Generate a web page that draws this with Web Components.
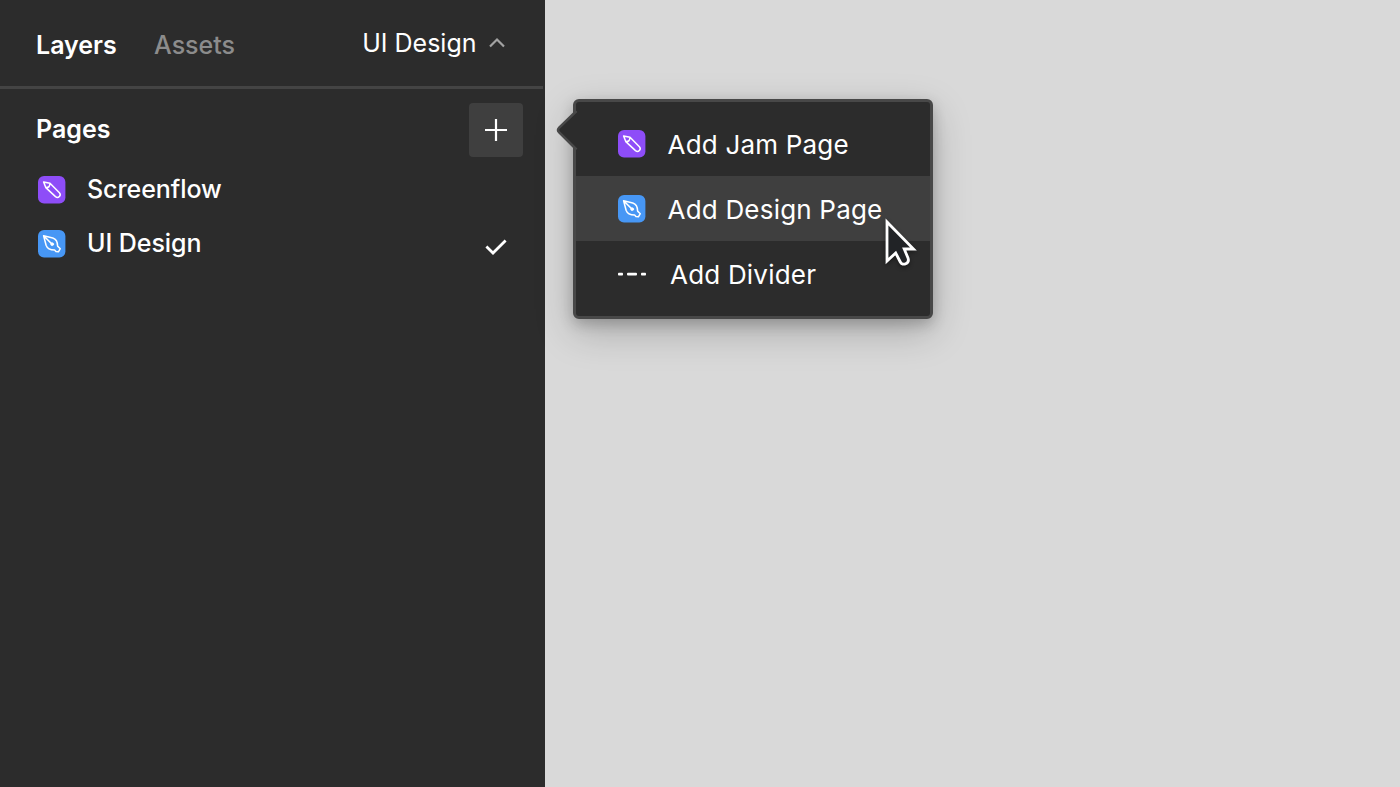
<!DOCTYPE html>
<html lang="en">
<head>
<meta charset="utf-8">
<title>Pages</title>
<style>
html,body{margin:0;height:100%;overflow:hidden;background:#d9d9d9}
body{font-family:Inter,"Liberation Sans",sans-serif;color:#fff}
</style>
</head>
<body>
<design-app></design-app>
<script>
const define = (name, html) => customElements.define(name, class extends HTMLElement {
  constructor() {
    super();
    const t = document.createElement('template');
    t.innerHTML = html;
    this.attachShadow({mode: 'open'}).append(t.content.cloneNode(true));
  }
});

define('jam-icon', `<style>:host{display:block;width:28px;height:28px;flex:none}svg{display:block}</style>
<svg width="28" height="28" viewBox="0 0 28 28" fill="none" stroke="#fff" stroke-width="1.5" stroke-linejoin="round" stroke-linecap="round">
<rect width="27.4" height="27.4" rx="6" fill="#8e4df8" stroke="none"/>
<path d="M5.6 5.9 L12 7.3 L21.4 16.7 C23.7 19.3 20.3 23 17.5 20.6 L7.8 11.6 Z M7.9 11.6 C10.8 11.7 12 10.3 11.9 7.4"/></svg>`);

define('pen-icon', `<style>:host{display:block;width:28px;height:28px;flex:none}svg{display:block}</style>
<svg width="28" height="28" viewBox="0 0 28 28" fill="none" stroke="#fff" stroke-width="1.5" stroke-linejoin="round" stroke-linecap="round">
<rect width="27.4" height="27.4" rx="6" fill="#4797f5" stroke="none"/>
<path d="M5.6 5.8 L14.8 8 C18.4 9.2 19.6 12.5 19.6 16.1 L22.3 18.7 L20.4 21.8 L17.9 21.4 L16.6 20 C12.6 20 9.4 18.9 8.1 15.2 Z M5.8 6 L14 14.1"/>
<circle cx="14.2" cy="14.2" r="1.4" fill="#fff" stroke-width=".8"/></svg>`);

define('divider-icon', `<style>:host{display:block;width:28px;height:28px;flex:none}svg{display:block}</style>
<svg width="28" height="28" viewBox="0 0 28 28" fill="#fff"><rect y="12.7" width="5" height="2.8" rx=".8"/><rect x="9" y="12.7" width="10" height="2.8" rx="1"/><rect x="23" y="12.7" width="5" height="2.8" rx=".8"/></svg>`);

define('app-tabs', `<style>
:host{display:flex;align-items:center;height:86px;box-sizing:border-box;padding:0 39.5px 0 36px;font-size:25px;line-height:30px}
.a{font-weight:600;width:118px;padding-top:4px}.b{font-weight:500;color:#8c8c8c;padding-top:4px}
.c{margin-left:auto;display:flex;align-items:center;gap:11px;padding-bottom:1px}
svg{display:block}</style>
<div class="a">Layers</div><div class="b">Assets</div>
<div class="c"><span>UI Design</span><svg width="18" height="12" viewBox="0 0 18 12" fill="none" stroke="#a2a2a2" stroke-width="2.2"><path d="M2 9.5 L9 2.5 L16 9.5"/></svg></div>`);

define('pages-heading', `<style>
:host{display:flex;align-items:center;justify-content:space-between;height:54px;padding:0 22px 0 36px;font-size:25px;line-height:30px;font-weight:600}
span{padding-bottom:2px}
button{display:grid;place-items:center;width:54px;height:54px;border:0;border-radius:4px;background:#3f3f3f;padding:0}
svg{display:block}</style>
<span>Pages</span><button aria-label="Add page"><svg width="24" height="24" viewBox="0 0 24 24" stroke="#fff" stroke-width="2.2"><path d="M1 12H23M12 1V23"/></svg></button>`);

define('page-row', `<style>
:host{display:flex;align-items:center;height:54px;padding:0 37px 0 37.5px;font-size:25px;line-height:30px;font-weight:500;letter-spacing:-.06px}
.t{margin-left:21.5px;flex:1;padding-bottom:2px}svg{display:none}:host([checked]) svg{display:block;margin-top:6px}</style>
<slot name="icon"></slot><span class="t"><slot></slot></span>
<svg width="24" height="18" viewBox="0 0 24 18" fill="none" stroke="#fff" stroke-width="2.8"><path d="M2.4 8.6 L9 15 L21.6 2.6"/></svg>`);

define('side-panel', `<style>
:host{display:block;width:545px;height:100%;background:#2c2c2c}
.line{height:3px;width:543px;background:#444;margin-bottom:14px}
.list{padding-top:6px}</style>
<app-tabs></app-tabs><div class="line"></div><pages-heading></pages-heading>
<div class="list"><page-row><jam-icon slot="icon"></jam-icon>Screenflow</page-row>
<page-row checked><pen-icon slot="icon"></pen-icon>UI Design</page-row></div>`);

define('menu-item', `<style>
:host{display:flex;align-items:center;height:65px;padding-left:42px;font-size:26px;line-height:32px;letter-spacing:.2px;white-space:nowrap}
:host([active]){background:#3f3f3f}
slot[name]{display:block}
.t{margin-left:21.5px;padding-top:2px}:host([wide]) .t{margin-left:24px}</style>
<slot name="icon"></slot><span class="t"><slot></slot></span>`);

define('add-menu', `<style>
:host{display:block;position:absolute;left:573px;top:98.5px;width:360px;height:220px;box-sizing:border-box;background:#2c2c2c;border:3px solid #484848;border-radius:6px;padding-top:9.5px;box-shadow:0 13px 38px rgba(0,0,0,.22),0 5px 14px rgba(0,0,0,.2)}
.arrow{position:absolute;left:-20.5px;top:4px}</style>
<svg class="arrow" width="22" height="48" viewBox="0 0 22 48" fill="#2c2c2c" stroke="#484848" stroke-width="2.6"><path d="M20.5 5 L3.2 21.6 Q.8 24 3.2 26.4 L20.5 43.5"/></svg>
<menu-item><jam-icon slot="icon"></jam-icon>Add Jam Page</menu-item>
<menu-item active><pen-icon slot="icon"></pen-icon>Add Design Page</menu-item>
<menu-item wide><divider-icon slot="icon"></divider-icon>Add Divider</menu-item>`);

define('mouse-cursor', `<style>:host{display:block;position:absolute;left:880px;top:212px}svg{display:block;filter:drop-shadow(0 2px 2px rgba(0,0,0,.4))}</style>
<svg width="44" height="62" viewBox="0 0 44 62" fill="#212326" stroke="#fff" stroke-width="2.8"><path d="M7 10 V49 L15.7 41 L20.3 50 C22.5 54.5 30 51.5 28 46 L24.2 37 H33.5 Z"/></svg>`);

define('design-app', `<style>:host{display:block;height:100vh;position:relative}</style>
<side-panel></side-panel><add-menu></add-menu><mouse-cursor></mouse-cursor>`);
</script>
</body>
</html>
